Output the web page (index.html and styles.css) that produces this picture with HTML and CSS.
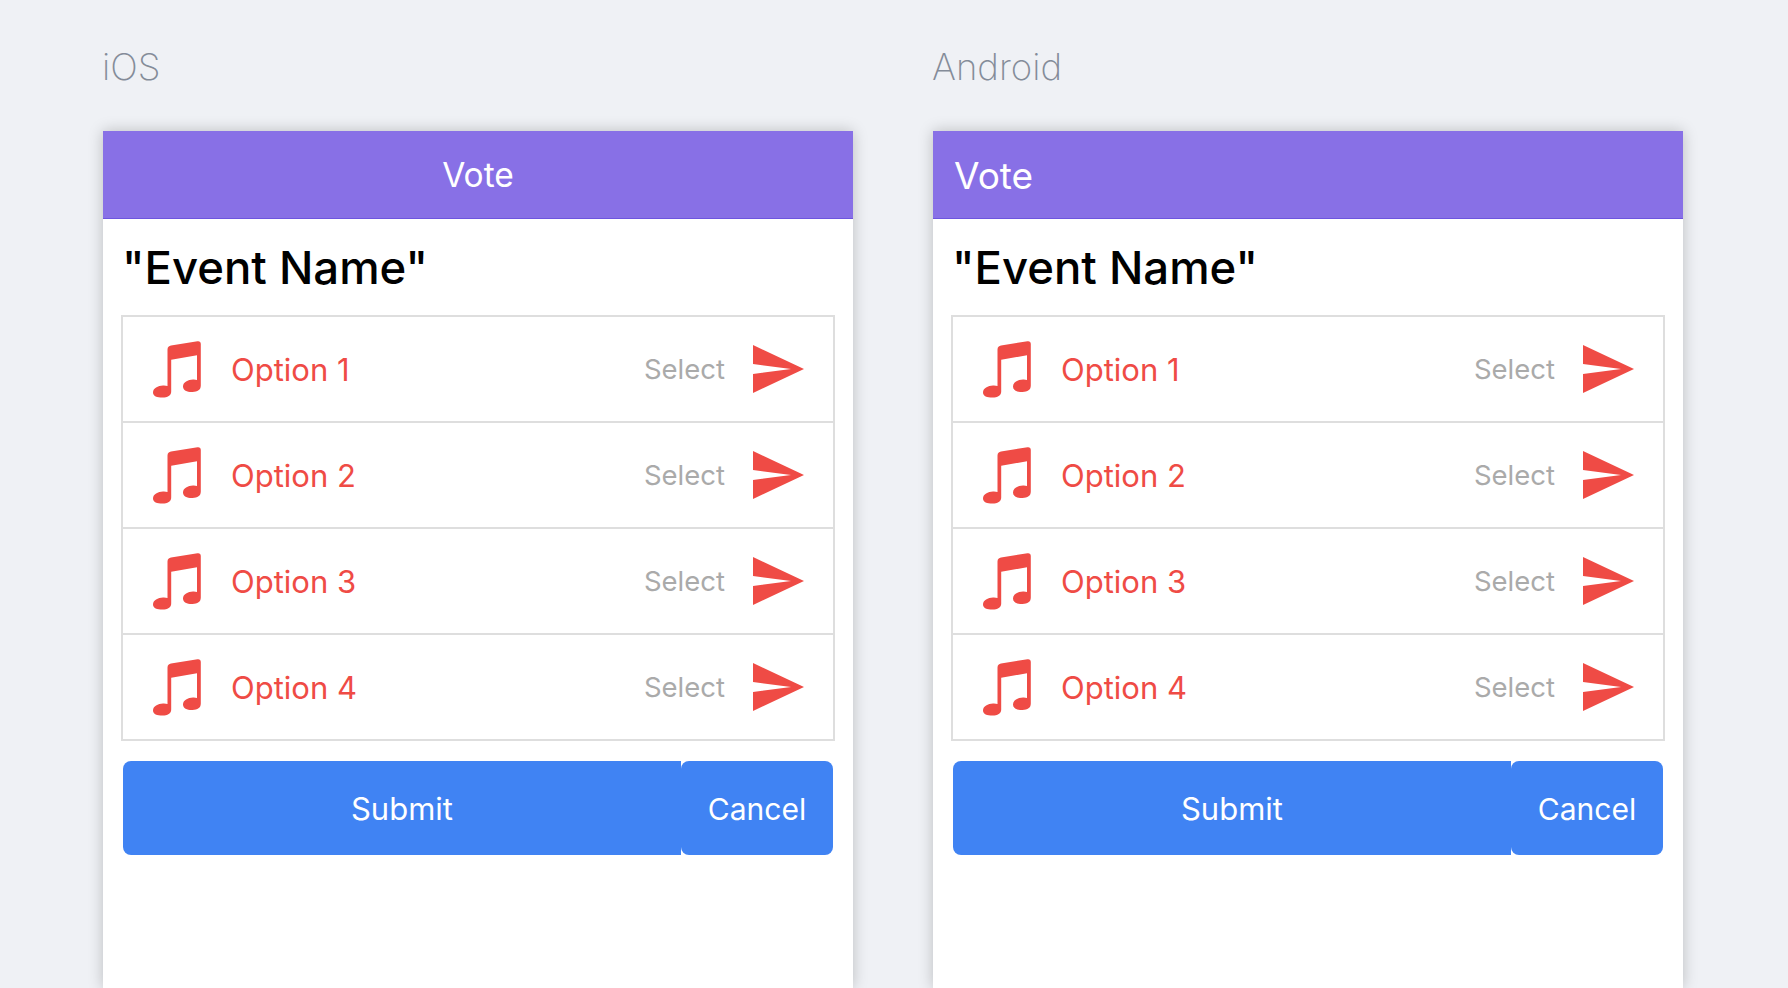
FILE: index.html
```html
<!DOCTYPE html>
<html lang="en">
<head>
    <meta charset="UTF-8">
    <title>Vote</title>
    <link rel="stylesheet" href="styles.css">
</head>
<body>
    <svg class="sprites" width="0" height="0">
        <symbol id="note" viewBox="0 0 48 57">
            <path d="M14.5 8.5C14.5 6 16 4.8 18 4.5L44.5.3C46.5 0 47.8 1 47.8 3V44.5C47.8 49 44.5 50.8 39.5 51 34.5 51.2 30 49.6 30 45.5 30 41 35 38.6 40 38.4 41.4 38.3 43 38.5 44 39V14.2L18.2 18.8V50.5C18.2 54.6 14.5 56.6 9.5 56.6 4 56.6 0 55.2 0 51.5 0 47 5 44.6 10 44.4 11.8 44.3 13.4 44.5 14.5 45Z"/>
        </symbol>
        <symbol id="send" viewBox="0 0 51 48">
            <path d="M0 0 51 24 0 48V29L38 24 0 19Z"/>
        </symbol>
    </svg>

    <div class="columns">
        <!-- iOS -->
        <section class="platform">
            <h2 class="platform-name">iOS</h2>
            <div class="phone">
                <header class="bar bar-ios">Vote</header>
                <div class="content">
                    <h1 class="event">"Event Name"</h1>
                    <ul class="options">
                        <li class="option">
                            <svg class="note"><use href="#note"/></svg>
                            <span class="option-name">Option 1</span>
                            <span class="select">Select</span>
                            <svg class="send"><use href="#send"/></svg>
                        </li>
                        <li class="option">
                            <svg class="note"><use href="#note"/></svg>
                            <span class="option-name">Option 2</span>
                            <span class="select">Select</span>
                            <svg class="send"><use href="#send"/></svg>
                        </li>
                        <li class="option">
                            <svg class="note"><use href="#note"/></svg>
                            <span class="option-name">Option 3</span>
                            <span class="select">Select</span>
                            <svg class="send"><use href="#send"/></svg>
                        </li>
                        <li class="option">
                            <svg class="note"><use href="#note"/></svg>
                            <span class="option-name">Option 4</span>
                            <span class="select">Select</span>
                            <svg class="send"><use href="#send"/></svg>
                        </li>
                    </ul>
                    <div class="actions">
                        <button class="btn btn-submit">Submit</button>
                        <button class="btn btn-cancel">Cancel</button>
                    </div>
                </div>
            </div>
        </section>

        <!-- Android -->
        <section class="platform">
            <h2 class="platform-name">Android</h2>
            <div class="phone">
                <header class="bar bar-android">Vote</header>
                <div class="content">
                    <h1 class="event">"Event Name"</h1>
                    <ul class="options">
                        <li class="option">
                            <svg class="note"><use href="#note"/></svg>
                            <span class="option-name">Option 1</span>
                            <span class="select">Select</span>
                            <svg class="send"><use href="#send"/></svg>
                        </li>
                        <li class="option">
                            <svg class="note"><use href="#note"/></svg>
                            <span class="option-name">Option 2</span>
                            <span class="select">Select</span>
                            <svg class="send"><use href="#send"/></svg>
                        </li>
                        <li class="option">
                            <svg class="note"><use href="#note"/></svg>
                            <span class="option-name">Option 3</span>
                            <span class="select">Select</span>
                            <svg class="send"><use href="#send"/></svg>
                        </li>
                        <li class="option">
                            <svg class="note"><use href="#note"/></svg>
                            <span class="option-name">Option 4</span>
                            <span class="select">Select</span>
                            <svg class="send"><use href="#send"/></svg>
                        </li>
                    </ul>
                    <div class="actions">
                        <button class="btn btn-submit">Submit</button>
                        <button class="btn btn-cancel">Cancel</button>
                    </div>
                </div>
            </div>
        </section>
    </div>
</body>
</html>
```

FILE: styles.css
```css
html, body {
    height: 100%;
}
body {
    margin: 0;
    overflow: hidden;
    background: #eff1f5;
    font-family: Inter, "Noto Sans", sans-serif;
}
.sprites {
    display: block;
    height: 0;
}
.columns {
    display: flex;
    gap: 80px;
    padding-left: 103px;
}
.platform {
    width: 750px;
}
.platform-name {
    margin: 0 0 0 -1px;
    height: 131px;
    padding-top: 46px;
    box-sizing: border-box;
    font-size: 36.5px;
    line-height: 42px;
    font-weight: 200;
    color: #848c99;
}
.phone {
    height: 857px;
    background: #fff;
    box-shadow: 0 0 14px rgba(0, 0, 0, 0.22);
}
.bar {
    height: 88px;
    box-sizing: border-box;
    border-bottom: 1px solid #6d55df;
    background: #8870e6;
    color: #fff;
    line-height: 89px;
}
.bar-ios {
    text-align: center;
    font-size: 33.5px;
}
.bar-android {
    padding-left: 21px;
    font-size: 37px;
}
.content {
    padding: 0 18px;
}
.event {
    margin: 0;
    height: 96px;
    padding-left: 1px;
    font-size: 45.5px;
    line-height: 98px;
    font-weight: 450;
    color: #000;
}
.options {
    list-style-type: none;
    margin: 0;
    padding: 0;
    border: 2px solid #dedede;
    border-bottom-width: 0;
}
.option {
    display: flex;
    align-items: center;
    height: 106px;
    box-sizing: border-box;
    border-bottom: 2px solid #dedede;
    padding-left: 30px;
}
.note {
    width: 48px;
    height: 57px;
    fill: #ef4b45;
}
.option-name {
    margin-left: 30px;
    font-size: 31px;
    color: #ef4b45;
}
.select {
    margin-left: auto;
    font-size: 27.5px;
    color: #aaa;
}
.send {
    width: 51px;
    height: 48px;
    margin: 0 29px 0 28px;
    fill: #ef4b45;
}
.actions {
    display: flex;
    margin: 20px 2px 0;
}
.btn {
    height: 94px;
    border: 0;
    padding: 0;
    background: #4083f3;
    color: #fff;
    font-family: inherit;
    font-size: 31px;
}
.btn-submit {
    flex: 1;
    border-radius: 8px 0 0 8px;
}
.btn-cancel {
    width: 152px;
    padding-top: 1px;
    border-radius: 8px;
    font-size: 30px;
}
```
